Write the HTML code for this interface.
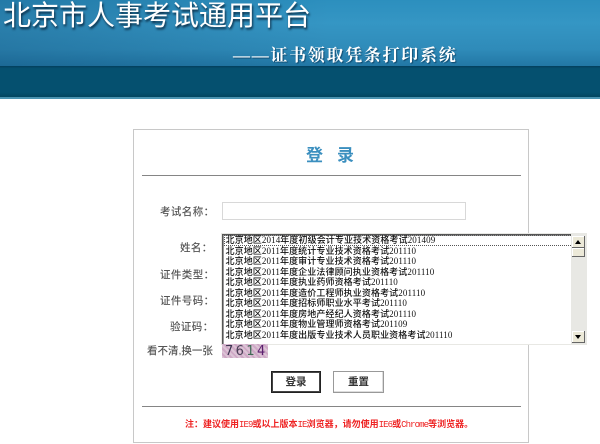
<!DOCTYPE html>
<html lang="zh-CN">
<head>
<meta charset="utf-8">
<title>北京市人事考试通用平台</title>
<style>
html,body{margin:0;padding:0;background:#fff;}
body{width:600px;height:444px;position:relative;overflow:hidden;font-family:"Liberation Serif","Noto Sans CJK SC",sans-serif;}
.a{position:absolute;white-space:nowrap;}
#hd{left:0;top:0;width:600px;height:66px;background:linear-gradient(90deg,rgba(10,60,100,.25) 0,rgba(0,0,0,0) 55%),linear-gradient(180deg,#2c8fbe 0,#3596c4 35%,#2f8bb9 75%,#2277a5 100%);}
#band{left:0;top:66px;width:600px;height:31px;background:linear-gradient(180deg,#023f5c 0,#05506f 8%,#05506f 85%,#03465f 100%);}
#band2{left:0;top:97px;width:600px;height:2px;background:#4b93b0;}
#t1{left:3px;top:-2px;font:28px/36px "Liberation Sans","Noto Sans CJK SC",sans-serif;color:#fff;text-shadow:1px 2px 2px rgba(0,20,40,.8);}
#t2{left:233px;top:45px;font:bold 17px/22px "Liberation Serif","Noto Serif CJK SC",serif;letter-spacing:1.7px;color:#fff;text-shadow:1px 1px 1px rgba(0,40,70,.6);}
#box{left:133px;top:129px;width:394px;height:312px;border:1px solid #c8c8c8;}
#h{left:306px;top:144px;font:bold 17px/24px "Liberation Sans","Noto Sans CJK SC",sans-serif;letter-spacing:14px;color:#3b8fbf;}
.ln{left:142px;width:379px;height:1px;background:#858585;}
.lb{font:10.5px/14px "Liberation Sans","Noto Sans CJK SC",sans-serif;font-weight:500;color:#555;letter-spacing:.4px;}
#inp{left:222px;top:202px;width:242px;height:16px;border:1px solid #d8d8d8;background:#fff;}
#list{left:222px;top:234px;width:364px;height:110px;background:#fff;box-shadow:inset 1px 1px 0 #555,inset 2px 2px 0 #999;outline:1px solid #e8e8e4;z-index:2;overflow:hidden;}
#rows{position:absolute;left:3.5px;top:1px;font:9px/10.55px "Liberation Serif","Noto Sans CJK SC",serif;font-weight:500;letter-spacing:.1px;color:#111;white-space:nowrap;}
#sel{position:absolute;left:2px;top:1px;width:347px;height:9px;border:1px dotted #555;}
#sb{position:absolute;right:0;top:0;width:15px;height:110px;background:#e8e8e4;}
.btn{position:absolute;left:1px;width:13px;background:#ece9d8;box-shadow:inset -1px -1px 0 #666,inset 1px 1px 0 #fff;}
.tri{position:absolute;left:3px;width:0;height:0;border-left:3.5px solid transparent;border-right:3.5px solid transparent;}
#cap{left:222px;top:344px;width:46px;height:14px;background:repeating-linear-gradient(45deg,#dcc4d6 0 2px,#cfa9c6 2px 4px);font:13px/15px "DejaVu Sans",sans-serif;letter-spacing:2.4px;color:#4a3a5c;text-indent:3px;z-index:3;overflow:hidden;}
.b{top:371px;height:22px;line-height:21px;text-align:center;font:bold 10.5px/21px "Liberation Sans","Noto Sans CJK SC",sans-serif;color:#333;background:#fff;box-sizing:border-box;}
#note{left:185px;top:418px;font:bold 9px/14px "Liberation Mono","Noto Sans CJK SC",monospace;color:#ee2222;}
#note i{font-style:normal;font-weight:400;letter-spacing:-.9px;}
</style>
</head>
<body>
<div class="a" id="hd"></div>
<div class="a" id="band"></div>
<div class="a" id="band2"></div>
<div class="a" id="t1">北京市人事考试通用平台</div>
<div class="a" id="t2">——证书领取凭条打印系统</div>

<div class="a" id="box"></div>
<div class="a" id="h">登录</div>
<div class="a ln" style="top:175px"></div>

<div class="a lb" style="left:160px;top:205px">考试名称：</div>
<div class="a" id="inp"></div>
<div class="a lb" style="left:180px;top:241px">姓名：</div>
<div class="a lb" style="left:160px;top:268px">证件类型：</div>
<div class="a lb" style="left:160px;top:294px">证件号码：</div>
<div class="a lb" style="left:170px;top:320px">验证码：</div>
<div class="a lb" style="left:147px;top:344px;letter-spacing:0">看不清,换一张</div>

<div class="a" id="list">
  <div id="sel"></div>
  <div id="rows">北京地区2014年度初级会计专业技术资格考试201409<br>北京地区2011年度统计专业技术资格考试201110<br>北京地区2011年度审计专业技术资格考试201110<br>北京地区2011年度企业法律顾问执业资格考试201110<br>北京地区2011年度执业药师资格考试201110<br>北京地区2011年度造价工程师执业资格考试201110<br>北京地区2011年度招标师职业水平考试201110<br>北京地区2011年度房地产经纪人资格考试201110<br>北京地区2011年度物业管理师资格考试201109<br>北京地区2011年度出版专业技术人员职业资格考试201110</div>
  <div id="sb">
    <div class="btn" style="top:2px;height:12px"><div class="tri" style="top:4px;border-bottom:4px solid #000"></div></div>
    <div class="btn" style="top:14px;height:9px"></div>
    <div class="btn" style="top:97px;height:12px"><div class="tri" style="top:4px;border-top:4px solid #000"></div></div>
  </div>
</div>

<div class="a" id="cap"><span style="color:#3c3550">7</span><span style="color:#4b4058">6</span><span style="color:#3f6a55">1</span><span style="color:#5a1f6e">4</span></div>
<div class="a b" style="left:271px;width:50px;border:1px solid #222;box-shadow:inset 0 0 0 1px #444">登录</div>
<div class="a b" style="left:333px;width:51px;border:1px solid #999;box-shadow:inset -1px -1px 0 #ddd">重置</div>
<div class="a ln" style="top:406px"></div>
<div class="a" id="note">注：建议使用<i>IE9</i>或以上版本<i>IE</i>浏览器，请勿使用<i>IE6</i>或<i>Chrome</i>等浏览器。</div>
</body>
</html>
